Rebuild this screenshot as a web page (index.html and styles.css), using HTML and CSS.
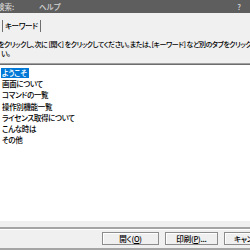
FILE: index.html
```html
<!DOCTYPE html>
<html lang="ja">
<head>
  <meta charset="UTF-8">
  <title>ヘルプ</title>
  <meta name="viewport" content="width=device-width, initial-scale=1.0">
  <link rel="stylesheet" href="styles.css">
</head>
<body>

<div class="window">
  <div class="titlebar">
    <span class="title-search">検索:</span>
    <span class="title-help">ヘルプ</span>
    <span class="title-q">?</span>
  </div>

  <div class="tabs">
    <span class="tab">キーワード</span>
  </div>

  <p class="instruction">
    <span class="line first">をクリックし、次に [開く] をクリックしてください。または、[キーワード] など別のタブをクリックしてくださ</span>
    <span class="line">い。</span>
  </p>

  <ul class="topic-list">
    <li class="selected"><span>ようこそ</span></li>
    <li><span>画面について</span></li>
    <li><span>コマンドの一覧</span></li>
    <li><span>操作別機能一覧</span></li>
    <li><span>ライセンス取得について</span></li>
    <li><span>こんな時は</span></li>
    <li><span>その他</span></li>
  </ul>

  <div class="footer">
    <button class="btn">開く(<u>O</u>)</button>
    <button class="btn">印刷(<u>P</u>)...</button>
    <button class="btn">キャンセル</button>
  </div>
</div>

</body>
</html>
```

FILE: styles.css
```css
body {
  margin: 0;
  background-color: #f0f0f0;
  font-family: "Noto Sans CJK JP", sans-serif;
  font-feature-settings: "palt";
  font-weight: 500;
  letter-spacing: -0.35px;
  color: #000;
  overflow: hidden;
}
.window {
  width: 250px;
  height: 250px;
  overflow: hidden;
  display: flex;
  flex-direction: column;
}
.titlebar {
  height: 13px;
  flex: none;
  display: flex;
  align-items: center;
  background: #5e5e5e;
  color: #d4d4d4;
  font-size: 7.5px;
  line-height: 13px;
  letter-spacing: 0;
}
.title-search {
  width: 42px;
  margin-left: -3px;
}
.title-help {
  flex: 1;
}
.title-q {
  padding-right: 9px;
}
.tabs {
  flex: none;
  height: 19px;
  display: flex;
  align-items: flex-end;
  padding-left: 2px;
}
.tab {
  font-size: 7.5px;
  line-height: 12px;
  padding: 0 2px;
  border-left: 1px solid #6e6e6e;
  border-right: 1px solid #6e6e6e;
}
.instruction {
  margin: 8px 0 0 0;
  height: 23px;
  font-size: 7px;
  line-height: 9px;
  letter-spacing: -0.45px;
}
.line {
  display: block;
  height: 9px;
  white-space: nowrap;
  padding-left: 1px;
}
.line.first {
  margin-left: -3px;
}
.topic-list {
  list-style: none;
  margin: 0;
  padding: 3px 0 0 1px;
  height: 154px;
  flex: none;
  background: #fff;
  border-top: 1px solid #a0a0a0;
  box-shadow: inset 0 1px 0 #6d6d6d;
  font-size: 7.5px;
  line-height: 11.2px;
}
.topic-list span {
  display: inline-block;
  height: 10px;
  line-height: 10px;
  padding: 0 2px 0 1px;
}
.topic-list .selected span {
  background: #0078d7;
  color: #fff;
}
.footer {
  flex: 1;
  display: flex;
  align-items: center;
  gap: 6px;
  padding-left: 102px;
  margin-top: 6px;
  border-top: 2px solid #a5a5a5;
  box-shadow: inset 0 1px 0 #fff;
  border-bottom: 2px solid #a5a5a5;
}
.btn {
  flex: none;
  width: 57px;
  height: 13px;
  padding: 0;
  background: #efefef;
  border: 1px solid #8c8c8c;
  box-shadow: inset 1px 1px 0 #fff;
  font-family: inherit;
  font-feature-settings: "palt";
  font-weight: 500;
  font-size: 7.5px;
  line-height: 11px;
  letter-spacing: -0.2px;
  color: #000;
}
.btn + .btn {
  width: 53px;
}
```
